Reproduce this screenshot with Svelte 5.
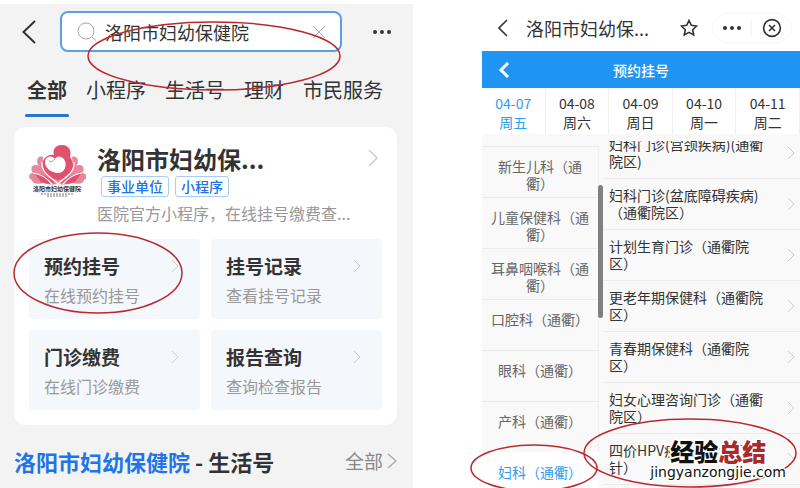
<script>
    const tabs = ["全部", "小程序", "生活号", "理财", "市民服务"];

    const tiles = [
        { title: "预约挂号", note: "在线预约挂号" },
        { title: "挂号记录", note: "查看挂号记录" },
        { title: "门诊缴费", note: "在线门诊缴费" },
        { title: "报告查询", note: "查询检查报告" },
    ];

    const dates = [
        { day: "04-07", week: "周五" },
        { day: "04-08", week: "周六" },
        { day: "04-09", week: "周日" },
        { day: "04-10", week: "周一" },
        { day: "04-11", week: "周二" },
    ];

    const departments = [
        "新生儿科（通衢）",
        "儿童保健科（通衢）",
        "耳鼻咽喉科（通衢）",
        "口腔科（通衢）",
        "眼科（通衢）",
        "产科（通衢）",
        "妇科（通衢）",
    ];

    const clinics = [
        "妇科门诊(宫颈疾病)(通衢院区)",
        "妇科门诊(盆底障碍疾病)（通衢院区）",
        "计划生育门诊（通衢院区）",
        "更老年期保健科（通衢院区）",
        "青春期保健科（通衢院区）",
        "妇女心理咨询门诊（通衢院区）",
        "四价HPV疫苗门诊（打针）",
    ];

    let keyword = "洛阳市妇幼保健院";
    let activeTab = "全部";
    let activeDate = "04-07";
    let activeDepartment = "妇科（通衢）";
</script>

<div class="page">
    <section class="search-panel">
        <header class="search-bar">
            <button class="icon-btn" aria-label="返回">
                <svg width="14" height="24" viewBox="0 0 14 24">
                    <path d="M13 1L1.5 12L13 23" />
                </svg>
            </button>
            <label class="search-box">
                <svg class="thin" width="20" height="20" viewBox="0 0 20 20">
                    <circle cx="9" cy="9" r="8" />
                    <path d="M15 15L19 18.5" />
                </svg>
                <input type="text" aria-label="搜索" bind:value={keyword} />
                <button class="icon-btn" aria-label="清除">
                    <svg class="thin" width="14" height="14" viewBox="0 0 14 14">
                        <path d="M1 1L13 13M13 1L1 13" />
                    </svg>
                </button>
            </label>
            <button class="icon-btn" aria-label="更多">
                <svg class="dots" width="20" height="6" viewBox="0 0 20 6">
                    <circle cx="3" cy="3" r="2" />
                    <circle cx="10" cy="3" r="2" />
                    <circle cx="17" cy="3" r="2" />
                </svg>
            </button>
        </header>

        <nav class="tabs">
            {#each tabs as tab}
                <button class:active={tab === activeTab} on:click={() => (activeTab = tab)}>
                    {tab}
                </button>
            {/each}
        </nav>

        <article class="card">
            <div class="profile">
                <svg class="logo" width="57" height="54" viewBox="0 0 57 54">
                    <path
                        fill="#e8879b"
                        d="M14 12C9 10 6 16 10 21C4 18 0 23 4 28C-1 28-1 34 3 35C3 38 8 40 15 38C20 40 26 40 29 38C32 40 38 40 43 38C50 40 55 38 55 35C59 34 58 28 53 28C57 23 53 18 47 21C51 16 48 10 43 12Q46 27 29 34Q12 28 14 12Z"
                    />
                    <path
                        fill="#e0506f"
                        d="M6 29C12 28 20 32 26 38Q18 40 12 37ZM52 29C46 28 38 32 32 38Q40 40 46 37Z"
                    />
                    <path
                        fill="#e0506f"
                        d="M25 10C23 3 28 0 33 0C40 0 43 6 41 12C47 20 44 33 29 35C14 32 11 21 15 14C18 10 22 9 25 10Z"
                    />
                    <path
                        fill="#fff"
                        d="M16 16C17 11 23 10 26 14C28 10 34 11 36 16C38 22 35 28 29 28C23 28 15 23 16 16Z"
                    />
                    <path
                        fill="none"
                        stroke="#e8879b"
                        d="M20 16Q23 18 26 14"
                    />
                    <path
                        fill="none"
                        stroke="#fff"
                        stroke-width="1.2"
                        d="M13 17C12 29 24 33 29 39C34 33 46 29 45 17M4 28C12 29 18 33 23 39M53 28C45 29 39 33 34 39"
                    />
                    <text x="28" y="46" font-size="6" font-weight="bold">洛阳市妇幼保健院</text>
                    <path stroke="#777" d="M12 49H45M18 51H39" stroke-dasharray="2 1" />
                </svg>
                <div class="summary">
                    <h1>洛阳市妇幼保...</h1>
                    <div class="badges">
                        <span>事业单位</span>
                        <span>小程序</span>
                    </div>
                    <p>医院官方小程序，在线挂号缴费查...</p>
                </div>
                <svg class="chevron" width="10" height="18" viewBox="0 0 10 18">
                    <path d="M1 1L9 9L1 17" />
                </svg>
            </div>
            <div class="tiles">
                {#each tiles as tile}
                    <a class="tile" href="#top">
                        <span class="tile-title">{tile.title}</span>
                        <span class="tile-note">{tile.note}</span>
                        <svg class="chevron" width="8" height="14" viewBox="0 0 8 14">
                            <path d="M1 1L7 7L1 13" />
                        </svg>
                    </a>
                {/each}
            </div>
        </article>

        <footer class="more">
            <h2><em>洛阳市妇幼保健院</em> - 生活号</h2>
            <a href="#all">
                全部
                <svg width="10" height="16" viewBox="0 0 10 16">
                    <path d="M1 1L9 8L1 15" />
                </svg>
            </a>
        </footer>
    </section>

    <section class="booking-panel">
        <header class="app-bar">
            <button class="icon-btn" aria-label="返回">
                <svg width="10" height="18" viewBox="0 0 10 18">
                    <path d="M9 1L1 9L9 17" />
                </svg>
            </button>
            <h2>洛阳市妇幼保...</h2>
            <button class="icon-btn" aria-label="收藏">
                <svg width="18" height="18" viewBox="0 0 18 18">
                    <path
                        d="M9 1.5L11.3 6.3L16.6 7L12.7 10.7L13.7 16L9 13.4L4.3 16L5.3 10.7L1.4 7L6.7 6.3Z"
                    />
                </svg>
            </button>
            <div class="capsule">
                <button class="icon-btn" aria-label="更多">
                    <svg class="dots" width="20" height="6" viewBox="0 0 20 6">
                        <circle cx="3" cy="3" r="2" />
                        <circle cx="10" cy="3" r="2" />
                        <circle cx="17" cy="3" r="2" />
                    </svg>
                </button>
                <button class="icon-btn" aria-label="关闭">
                    <svg width="20" height="20" viewBox="0 0 20 20">
                        <circle cx="10" cy="10" r="8.4" />
                        <path d="M7 7L13 13M13 7L7 13" />
                    </svg>
                </button>
            </div>
        </header>

        <div class="title-bar">
            <button class="icon-btn" aria-label="返回">
                <svg width="12" height="16" viewBox="0 0 12 16">
                    <path d="M10 1L3 8L10 15" />
                </svg>
            </button>
            <h3>预约挂号</h3>
        </div>

        <div class="dates">
            {#each dates as date}
                <button
                    class:active={date.day === activeDate}
                    on:click={() => (activeDate = date.day)}
                >
                    <span>{date.day}</span>
                    <span>{date.week}</span>
                </button>
            {/each}
        </div>

        <div class="columns">
            <div class="departments">
                {#each departments as name}
                    <button
                        class:active={name === activeDepartment}
                        on:click={() => (activeDepartment = name)}
                    >
                        {name}
                    </button>
                {/each}
                <div class="scroll-thumb"></div>
            </div>
            <div class="clinics">
                {#each clinics as clinic}
                    <a href="#clinic">
                        <span>{clinic}</span>
                        <svg class="chevron" width="8" height="14" viewBox="0 0 8 14">
                            <path d="M1 1L7 7L1 13" />
                        </svg>
                    </a>
                {/each}
            </div>
        </div>
    </section>

    <!-- hand-drawn marks and the site stamp sit above both phones -->
    <svg class="marks" viewBox="0 0 800 488" preserveAspectRatio="none">
        <ellipse cx="214" cy="56" rx="126" ry="34" />
        <ellipse cx="98" cy="273" rx="84" ry="40" />
        <ellipse cx="534" cy="468" rx="63" ry="23" />
        <ellipse cx="690" cy="453" rx="106" ry="34" />
    </svg>
    <div class="stamp">
        <strong>经验<b>总结</b></strong>
        <span>jingyanzongjie.com</span>
    </div>
</div>

<style>
    :global(body) {
        margin: 0;
        background: #fff;
    }

    .page {
        position: relative;
        box-sizing: border-box;
        display: grid;
        grid-template-columns: 413fr 318fr;
        column-gap: 69px;
        height: 100vh;
        padding-top: 4px;
        overflow: hidden;
        color: #333;
        font-family: "Noto Sans CJK SC", sans-serif;
    }

    h1,
    h2,
    h3,
    p {
        margin: 0;
    }

    button,
    input {
        padding: 0;
        border: 0;
        background: none;
        color: inherit;
        font: inherit;
    }

    a {
        color: inherit;
        text-decoration: none;
    }

    svg {
        display: block;
        flex: none;
        fill: none;
        stroke: #333;
        stroke-width: 2;
    }

    .icon-btn {
        display: flex;
        flex: none;
    }

    .dots {
        fill: #333;
        stroke: none;
    }

    .thin {
        stroke: #aaa;
        stroke-width: 1;
    }

    .chevron {
        stroke: #ccc;
        stroke-width: 1;
    }

    .search-panel {
        min-width: 0;
        background: #f3f3f3;
    }

    .search-bar {
        display: flex;
        align-items: center;
        padding: 7px 21px 0 22px;
    }

    .search-box {
        box-sizing: border-box;
        display: flex;
        flex: 1;
        align-items: center;
        height: 41px;
        min-width: 0;
        margin: 0 30px 0 24px;
        padding: 0 14px 0 15px;
        border: 2px solid #5c9ce8;
        border-radius: 8px;
        background: #fff;
    }

    .search-box input {
        flex: 1;
        min-width: 0;
        margin-left: 8px;
        outline: 0;
        font-size: 18px;
        line-height: 24px;
    }

    .tabs {
        display: flex;
        gap: 19px;
        padding: 24px 27px 0;
    }

    .tabs button {
        position: relative;
        height: 41px;
        padding-bottom: 13px;
        font-size: 20px;
        line-height: 28px;
        white-space: nowrap;
    }

    .tabs .active {
        font-weight: 700;
    }

    .tabs .active::after {
        content: "";
        position: absolute;
        right: -2px;
        bottom: 0;
        left: -2px;
        height: 3px;
        border-radius: 2px;
        background: #2a72d4;
    }

    .card {
        margin: 10px 16px 0 14px;
        padding: 15px;
        border-radius: 12px;
        background: #fff;
    }

    .profile {
        display: flex;
        align-items: flex-start;
        height: 97px;
    }

    .logo {
        margin-top: 3px;
        stroke: none;
        stroke-width: 1;
    }

    .logo text {
        fill: #333;
        text-anchor: middle;
    }

    .summary {
        flex: 1;
        min-width: 0;
        margin-left: 11px;
        white-space: nowrap;
    }

    .summary h1 {
        font-size: 24px;
        line-height: 34px;
    }

    .summary p {
        margin-top: 4px;
        color: #999;
        font-size: 16px;
        line-height: 24px;
    }

    .badges {
        display: flex;
        gap: 6px;
        margin-left: 4px;
    }

    .badges span {
        padding: 0 5px;
        border: 1px solid #a9cdf3;
        border-radius: 3px;
        color: #2272e0;
        font-size: 14px;
        font-weight: 500;
        line-height: 19px;
    }

    .profile .chevron {
        margin: 7px 4px 0 0;
        stroke-width: 1.5;
    }

    .tiles {
        display: grid;
        grid-template-columns: 1fr 1fr;
        gap: 11px;
    }

    .tile {
        display: grid;
        grid-template-columns: 1fr auto;
        align-items: center;
        row-gap: 2px;
        padding: 13px 21px 11px 15px;
        border-radius: 4px;
        background: #f4f7fc;
    }

    .tile-title {
        font-size: 19px;
        font-weight: 700;
        line-height: 28px;
    }

    .tile-note {
        grid-row: 2;
        color: #999;
        font-size: 16px;
        line-height: 26px;
    }

    .more {
        display: flex;
        align-items: center;
        justify-content: space-between;
        padding: 20px 16px 0 14px;
        line-height: 32px;
        white-space: nowrap;
    }

    .more h2 {
        font-size: 22px;
    }

    .more em {
        color: #1f74ea;
        font-style: normal;
    }

    .more a {
        display: flex;
        align-items: center;
        gap: 4px;
        color: #888;
        font-size: 19px;
    }

    .more svg {
        stroke: #aaa;
        stroke-width: 1.5;
    }

    .booking-panel {
        display: flex;
        flex-direction: column;
        min-width: 0;
        min-height: 0;
        background: #f9f9f9;
    }

    .app-bar {
        display: flex;
        align-items: center;
        height: 47px;
        padding: 0 8px 0 16px;
        background: #fff;
    }

    .app-bar svg {
        stroke-width: 1.6;
    }

    .app-bar h2 {
        flex: 1;
        margin-left: 18px;
        font-size: 18px;
        font-weight: 400;
        white-space: nowrap;
    }

    .capsule {
        display: flex;
        align-items: center;
        gap: 9px;
        margin-left: 14px;
        padding: 4px 9px;
        border: 1px solid #f6f6f6;
        border-radius: 16px;
    }

    .capsule .icon-btn + .icon-btn {
        padding-left: 10px;
        border-left: 1px solid #f3f3f3;
    }

    .title-bar {
        display: grid;
        grid-template-columns: 12px 1fr 12px;
        align-items: center;
        height: 37px;
        padding: 0 16px;
        background: #2094f3;
        color: #fff;
    }

    .title-bar svg {
        stroke: #fff;
        stroke-width: 3;
    }

    .title-bar h3 {
        font-size: 14px;
        font-weight: 500;
        line-height: 20px;
        text-align: center;
    }

    .dates {
        display: grid;
        grid-template-columns: repeat(5, 1fr);
        background: #fff;
    }

    .dates button {
        display: flex;
        flex-direction: column;
        align-items: center;
        padding: 6px 0 2px;
        border-right: 1px solid #f0f0f0;
        font-size: 14px;
        line-height: 19px;
    }

    .dates .active {
        color: #2f9bf2;
    }

    .columns {
        display: grid;
        flex: 1;
        grid-template-columns: 117px 1fr;
        column-gap: 4px;
        min-height: 0;
        margin-top: 7px;
        overflow: hidden;
        text-spacing-trim: space-all;
    }

    .departments {
        position: relative;
        padding-top: 5px;
    }

    .departments button {
        box-sizing: border-box;
        display: flex;
        justify-content: center;
        width: 100%;
        height: 51px;
        padding: 11px 8px 0;
        border-top: 1px solid #ececec;
        border-right: 1px solid #f0f0f0;
        color: #666;
        font-size: 14px;
        line-height: 17px;
        text-spacing-trim: inherit;
    }

    .departments .active {
        border-color: transparent;
        background: #fff;
        color: #2f9bf2;
    }

    .scroll-thumb {
        position: absolute;
        top: 44px;
        right: -4px;
        width: 5px;
        height: 133px;
        border-radius: 3px;
        background: #808080;
    }

    .clinics {
        margin-top: -13px;
    }

    .clinics a {
        box-sizing: border-box;
        display: flex;
        align-items: center;
        justify-content: space-between;
        height: 51px;
        padding: 0 5px 0 6px;
        border-bottom: 1px solid #ececec;
        font-size: 14px;
        line-height: 17px;
    }

    .clinics span {
        width: 158px;
    }

    .marks {
        position: absolute;
        inset: 0;
        width: 100%;
        height: 100%;
        stroke: #b9292f;
        stroke-width: 1.5;
        pointer-events: none;
    }

    .stamp {
        position: absolute;
        right: 14px;
        bottom: 8px;
        display: flex;
        flex-direction: column;
        align-items: center;
        color: #111;
        text-shadow:
            -2px 0 1px #fff,
            2px 0 1px #fff,
            0 -2px 1px #fff,
            0 2px 1px #fff,
            -1px -1px 1px #fff,
            1px -1px 1px #fff,
            -1px 1px 1px #fff,
            1px 1px 1px #fff;
    }

    .stamp strong {
        font-size: 24px;
        font-weight: 900;
        line-height: 26px;
    }

    .stamp b {
        color: #a82a2c;
    }

    .stamp span {
        font-family: "DejaVu Sans", sans-serif;
        font-size: 14px;
        line-height: 16px;
    }
</style>
